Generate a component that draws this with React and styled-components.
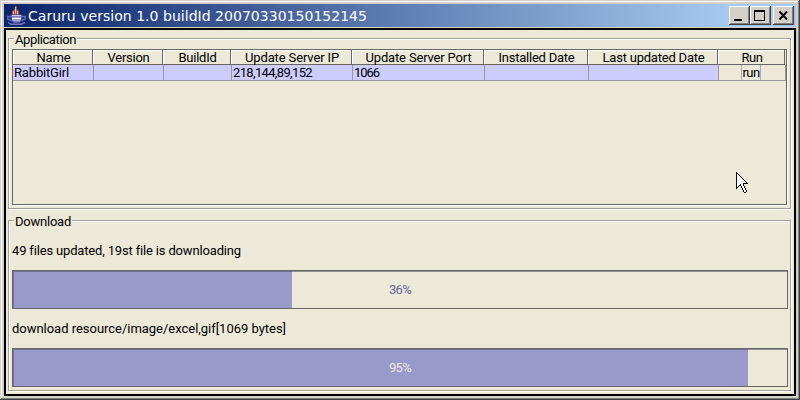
import React, { useLayoutEffect, useRef, useState } from "react";
import styled, { createGlobalStyle } from "styled-components";

const Global = createGlobalStyle`
  *, *::before, *::after { box-sizing: border-box; }
  body { margin: 0; overflow: hidden; }
`;

const Frame = styled.div`
  width: 800px;
  height: 400px;
  display: flex;
  flex-direction: column;
  padding: 4px;
  background: #d4d0c8;
  box-shadow: inset -1px -1px 0 #404040, inset 1px 1px 0 #d4d0c8,
    inset -2px -2px 0 #808080, inset 2px 2px 0 #fff;
  font-family: Roboto, "Liberation Sans", sans-serif;
  font-size: 13px;
  color: #000;
`;

const TitleBar = styled.header`
  height: 23px;
  flex: none;
  display: flex;
  align-items: flex-start;
  padding: 0 2px 0 3px;
  background: linear-gradient(90deg, #0a246a, #a6caf0 92%);
`;

const Title = styled.h1`
  flex: 1;
  margin: 0 0 0 1px;
  padding-top: 1px;
  font: 14px/23px "DejaVu Sans", sans-serif;
  color: #fff;
`;

const WindowButton = styled.button`
  width: 21px;
  height: 19px;
  margin: 2px 0 0 ${(p) => p.$gap || 0}px;
  padding: 0;
  border: 0;
  display: block;
  background: #d4d0c8;
  box-shadow: inset -1px -1px 0 #404040, inset 1px 1px 0 #fff, inset -2px -2px 0 #808080;
  svg { display: block; }
`;

const Client = styled.main`
  flex: 1;
  width: 792px;
  margin-top: 1px;
  border: 2px solid #000;
  padding: 8px 3px 2px 2px;
  background: #ece9d8;
  display: flex;
  flex-direction: column;
`;

const Group = styled.section`
  height: ${(p) => p.$height}px;
  margin-bottom: ${(p) => p.$gap || 0}px;
  width: 783px;
  flex: none;
  border: 1px solid #a5a397;
  box-shadow: 1px 1px 0 #fff, inset 1px 1px 0 #fff;
  padding: 0 3px;
  display: flex;
  flex-direction: column;
`;

const Legend = styled.h2`
  height: 16px;
  margin: -6px 0 0 2px;
  padding: 0 1px;
  align-self: flex-start;
  background: #ece9d8;
  font: inherit;
  line-height: 14px;
`;

const TablePane = styled.div`
  width: 775px;
  height: 156px;
  flex: none;
  border: 1px solid #666;
  box-shadow: 1px 1px 0 #fff;
`;

const Columns = styled.div`
  display: grid;
  grid-template-columns: 80px 70px 68px 121px 132px 104px 130px 67px;
  width: 772px;
`;

const HeaderCell = styled.div`
  height: 15px;
  padding-left: 2px;
  display: flex;
  justify-content: center;
  line-height: 16px;
  border-right: 1px solid #666;
  border-bottom: 1px solid #666;
  box-shadow: inset 1px 1px 0 #fff;
`;

const Cell = styled.div`
  height: 16px;
  padding-left: ${(p) => p.$inset || 0}px;
  line-height: 15px;
  background: ${(p) => (p.$plain ? "#ece9d8" : "#ccf")};
  border-bottom: 1px solid #999;
  box-shadow: ${(p) => (p.$first ? "none" : "inset 1px 0 0 #999")}${(p) => (p.$plain ? ", 1px 0 0 #999" : "")};
  display: flex;
  justify-content: ${(p) => (p.$plain ? "center" : "flex-start")};
`;

const RunButton = styled.button`
  width: 20px;
  height: 15px;
  margin-right: 1px;
  padding: 0;
  border: 0;
  border-left: 1px solid #a8a8d8;
  border-right: 1px solid #a8a8d8;
  background: #ece9d8;
  font: inherit;
  line-height: 15px;
  display: flex;
  justify-content: center;
`;

const Status = styled.p`
  height: 18px;
  line-height: 18px;
  margin: ${(p) => p.$top}px 0 ${(p) => p.$bottom}px;
`;

const Track = styled.div`
  width: 776px;
  height: 39px;
  flex: none;
  border: 1px solid #666;
  display: grid;
  background: linear-gradient(90deg, #99c ${(p) => p.$fill}px, #ece9d8 ${(p) => p.$fill}px);
  box-shadow: inset 1px 1px 0 rgba(90, 90, 100, 0.6);
  color: ${(p) => p.$ink};
  place-items: center;
`;

const FitText = styled.span`
  display: inline-block;
  white-space: pre;
`;

/* Spreads a label's letters over the given number of pixels. */
function Fit({ width, children }) {
  const ref = useRef(null);
  const [spacing, setSpacing] = useState(0);
  useLayoutEffect(() => {
    const natural = ref.current.getBoundingClientRect().width;
    setSpacing((width - natural) / children.length);
  }, []);
  return (
    <FitText ref={ref} style={{ letterSpacing: `${spacing}px` }}>
      {children}
    </FitText>
  );
}

const CursorSvg = styled.svg`
  position: absolute;
  left: 736px;
  top: 172px;
`;

const arrow = [
  "X", "XX", "X.X", "X..X", "X...X", "X....X", "X.....X", "X......X",
  "X.......X", "X........X", "X.........X", "X......XXXXX", "X...X..X",
  "X..XX..X", "X.X  X..X", "XX   X..X", "X     X..X", "      X..X",
  "       X..X", "       X..X", "        XX",
];

function Cursor() {
  return (
    <CursorSvg width="12" height="21" shapeRendering="crispEdges">
      {arrow.flatMap((row, y) =>
        [...row].map((c, x) =>
          c === " " ? null : (
            <rect key={`${x}-${y}`} x={x} y={y} width="1" height="1" fill={c === "X" ? "#000" : "#fff"} />
          )
        )
      )}
    </CursorSvg>
  );
}

function JavaCup() {
  return (
    <svg width="20" height="22" viewBox="0 0 20 22">
      <path d="M5 11V7L8 5V1L10 3V5L12 7V11Z" fill="#9c5048" />
      <path d="M6.500 10V7.500M8.500 9.500V3M10.500 10V7" stroke="#f0b8a0" strokeWidth="1.100" />
      <path d="M3.500 11H15.500L14.500 17 12 19H7L4.500 17Z" fill="#7078c0" stroke="#3c3c90" />
      <path d="M5 11.500H14" stroke="#c8ccf0" strokeWidth="1.200" />
      <path d="M5 14.500H14" stroke="#fff" strokeWidth="1.600" />
      <path d="M6 16.800H13" stroke="#a8b0e4" />
      <path d="M4 12.500H.800V15.500L4.500 16.500M15 12.500H18.300V15L14.500 16.500" fill="none" stroke="#6068b4" strokeWidth="1.500" />
      <path d="M1 18.500 4 20.300H14L18 18.500" fill="none" stroke="#7078c4" strokeWidth="1.400" />
    </svg>
  );
}

const headers = [
  ["Name", 34], ["Version", 42], ["BuildId", 38], ["Update Server IP", 94],
  ["Update Server Port", 106], ["Installed Date", 76], ["Last updated Date", 102], ["Run", 21],
];
const cells = [["RabbitGirl", 55], null, null, ["218,144,89,152", 79], ["1066", 25], null, null];

export default function App() {
  return (
    <Frame>
      <Global />
      <TitleBar>
        <JavaCup />
        <Title><Fit width={339}>Caruru version 1.0 buildId 20070330150152145</Fit></Title>
        <WindowButton aria-label="Minimize">
          <svg width="21" height="19"><path d="M5 13h8v2H5z" /></svg>
        </WindowButton>
        <WindowButton aria-label="Maximize">
          <svg width="21" height="19" shapeRendering="crispEdges">
            <path d="M4 4h11v11H4zM5 6v8h9V6z" fillRule="evenodd" />
          </svg>
        </WindowButton>
        <WindowButton aria-label="Close" $gap={2}>
          <svg width="21" height="19">
            <path d="M6.500 5.500 14 13.500M14 5.500 6.500 13.500" stroke="#000" strokeWidth="2" fill="none" />
          </svg>
        </WindowButton>
      </TitleBar>
      <Client>
        <Group $height={171} $gap={11}>
          <Legend><Fit width={61}>Application</Fit></Legend>
          <TablePane>
            <Columns>
              {headers.map(([t, w]) => <HeaderCell key={t}><Fit width={w}>{t}</Fit></HeaderCell>)}
              {cells.map((c, i) => (
                <Cell key={i} $first={i === 0} $inset={i > 2 ? 2 : 1}>{c && <Fit width={c[1]}>{c[0]}</Fit>}</Cell>
              ))}
              <Cell $plain><RunButton><Fit width={17}>run</Fit></RunButton></Cell>
            </Columns>
          </TablePane>
        </Group>
        <Group $height={171}>
          <Legend><Fit width={56}>Download</Fit></Legend>
          <Status $top={11} $bottom={10}><Fit width={228}>49 files updated, 19st file is downloading</Fit></Status>
          <Track $fill={279} $ink="#66669a"><Fit width={22}>36%</Fit></Track>
          <Status $top={11} $bottom={10}><Fit width={274}>download resource/image/excel,gif[1069 bytes]</Fit></Status>
          <Track $fill={735} $ink="#ece9d8"><Fit width={22}>95%</Fit></Track>
        </Group>
      </Client>
      <Cursor />
    </Frame>
  );
}
